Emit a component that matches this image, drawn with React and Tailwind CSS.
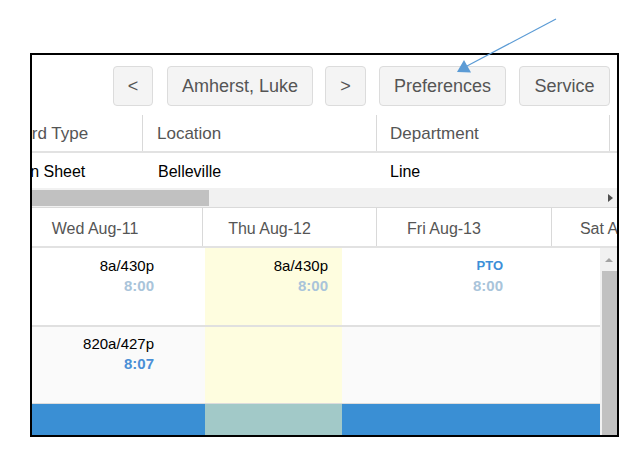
import React from 'react';

const font = "font-['Liberation_Sans',Arial,sans-serif]";

function Btn({ w, children }) {
  return (
    <div
      className={`${w} h-[40px] shrink-0 flex items-center justify-center rounded-[4px] border border-[#dcdcdc] bg-[#f4f4f4] text-[18px] text-[#555]`}
    >
      {children}
    </div>
  );
}

function DayCell({ w, children, last }) {
  return (
    <div
      className={`${w} shrink-0 h-full flex items-center justify-center pr-10 pt-[3px] text-[16px] text-[#555] ${
        last ? '' : 'border-r border-[#d9d9d9]'
      }`}
    >
      <span className="whitespace-nowrap">{children}</span>
    </div>
  );
}

function Shift({ time, hours, light }) {
  return (
    <div className="flex flex-col items-end leading-[20px]">
      <span className="text-[15px] text-black">{time}</span>
      <span className={`text-[15px] font-bold ${light ? 'text-[#a9c4da]' : 'text-[#4a8fd6]'}`}>{hours}</span>
    </div>
  );
}

function BodyRow({ className, wed, thu, fri, pt }) {
  return (
    <div className={`flex ml-[-4px] ${className}`}>
      <div className={`w-[175px] shrink-0 pr-[49px] ${pt} flex justify-end`}>{wed}</div>
      <div className="w-[174px] shrink-0 pl-[2px] flex">
        <div className={`w-[137px] bg-[#fefddf] pr-[14px] ${pt} flex justify-end`}>{thu}</div>
      </div>
      <div className={`w-[175px] shrink-0 pr-[49px] ${pt} flex justify-end`}>{fri}</div>
      <div className="flex-1" />
    </div>
  );
}

export default function App() {
  return (
    <div className={`w-[640px] h-[452px] bg-white relative pt-[53px] pl-[30px] ${font}`}>
      {/* annotation arrow */}
      <svg className="absolute left-0 top-0" width="640" height="452">
        <line x1="556" y1="19" x2="467" y2="66" stroke="#5b9bd5" strokeWidth="1.2" />
        <polygon points="457,72 471,72.6 464,60" fill="#5b9bd5" />
      </svg>

      <div className="w-[589px] h-[384px] border-2 border-black overflow-hidden flex flex-col">
        {/* toolbar */}
        <div className="h-[60px] shrink-0 pt-[11px] pr-[7px] flex justify-end">
          <div className="flex">
            <Btn w="w-[40px]">&lt;</Btn>
            <div className="w-[14px]" />
            <Btn w="w-[146px]">Amherst, Luke</Btn>
            <div className="w-[12px]" />
            <Btn w="w-[41px]">&gt;</Btn>
            <div className="w-[13px]" />
            <Btn w="w-[127px]">Preferences</Btn>
            <div className="w-[13px]" />
            <Btn w="w-[91px]">Service</Btn>
          </div>
        </div>

        {/* column headers */}
        <div className="h-[38px] shrink-0 border-b-2 border-[#e2e2e2] flex ml-[-36px] text-[17px] text-[#555]">
          <div className="w-[147px] shrink-0 border-r border-[#d9d9d9] pl-[14px] pt-[2px] flex items-center whitespace-nowrap">Card Type</div>
          <div className="w-[234px] shrink-0 border-r border-[#d9d9d9] pl-[14px] pt-[2px] flex items-center">Location</div>
          <div className="w-[233px] shrink-0 border-r border-[#d9d9d9] pl-[13px] pt-[2px] flex items-center">Department</div>
          <div className="flex-1" />
        </div>

        {/* data row */}
        <div className="h-[35px] shrink-0 flex ml-[-36px] text-[16px] text-black pt-[2px]">
          <div className="w-[147px] shrink-0 pl-[11px] flex items-center whitespace-nowrap">Plan Sheet</div>
          <div className="w-[234px] shrink-0 pl-[15px] flex items-center">Belleville</div>
          <div className="w-[233px] shrink-0 pl-[13px] flex items-center">Line</div>
        </div>

        {/* horizontal scrollbar */}
        <div className="h-[20px] shrink-0 bg-[#f1f1f1] border-b border-[#dadada] flex items-center pr-[4px]">
          <div className="w-[177px] h-[16px] bg-[#c1c1c1]" />
          <div className="flex-1" />
          <div className="w-0 h-0 border-y-[4px] border-y-transparent border-l-[5px] border-l-[#505050]" />
        </div>

        {/* day headers */}
        <div className="h-[40px] shrink-0 border-b-2 border-[#e2e2e2] flex ml-[-4px]">
          <DayCell w="w-[175px]">Wed Aug-11</DayCell>
          <DayCell w="w-[174px]">Thu Aug-12</DayCell>
          <DayCell w="w-[175px]">Fri Aug-13</DayCell>
          <DayCell w="w-[175px]" last>Sat Aug-14</DayCell>
        </div>

        {/* body */}
        <div className="flex-1 flex min-h-0">
          <div className="flex-1 flex flex-col">
            <BodyRow
              className="h-[79px] bg-white border-b-2 border-[#e0e0e0]"
              pt="pt-[8px]"
              wed={<Shift time="8a/430p" hours="8:00" light />}
              thu={<Shift time="8a/430p" hours="8:00" light />}
              fri={
                <div className="flex flex-col items-end leading-[20px]">
                  <span className="text-[13px] font-bold text-[#3d8fd8]">PTO</span>
                  <span className="text-[15px] font-bold text-[#a9c4da]">8:00</span>
                </div>
              }
            />
            <BodyRow
              className="h-[77px] bg-[#fafafa] border-b border-[#dcdcdc]"
              pt="pt-[7px]"
              wed={<Shift time="820a/427p" hours="8:07" />}
              thu={null}
              fri={null}
            />
            <div className="flex-1 flex ml-[-4px] bg-[#3a8fd4]">
              <div className="w-[177px] shrink-0" />
              <div className="w-[137px] shrink-0 bg-[#a2c9c8]" />
            </div>
          </div>
          <div className="w-[17px] shrink-0 bg-[#f1f1f1] flex flex-col items-center">
            <div className="h-[23px] flex items-center justify-center">
              <div className="w-0 h-0 border-x-[4px] border-x-transparent border-b-[4px] border-b-[#a3a3a3]" />
            </div>
            <div className="flex-1 w-[15px] ml-[1px] bg-[#c1c1c1]" />
          </div>
        </div>
      </div>
    </div>
  );
}
